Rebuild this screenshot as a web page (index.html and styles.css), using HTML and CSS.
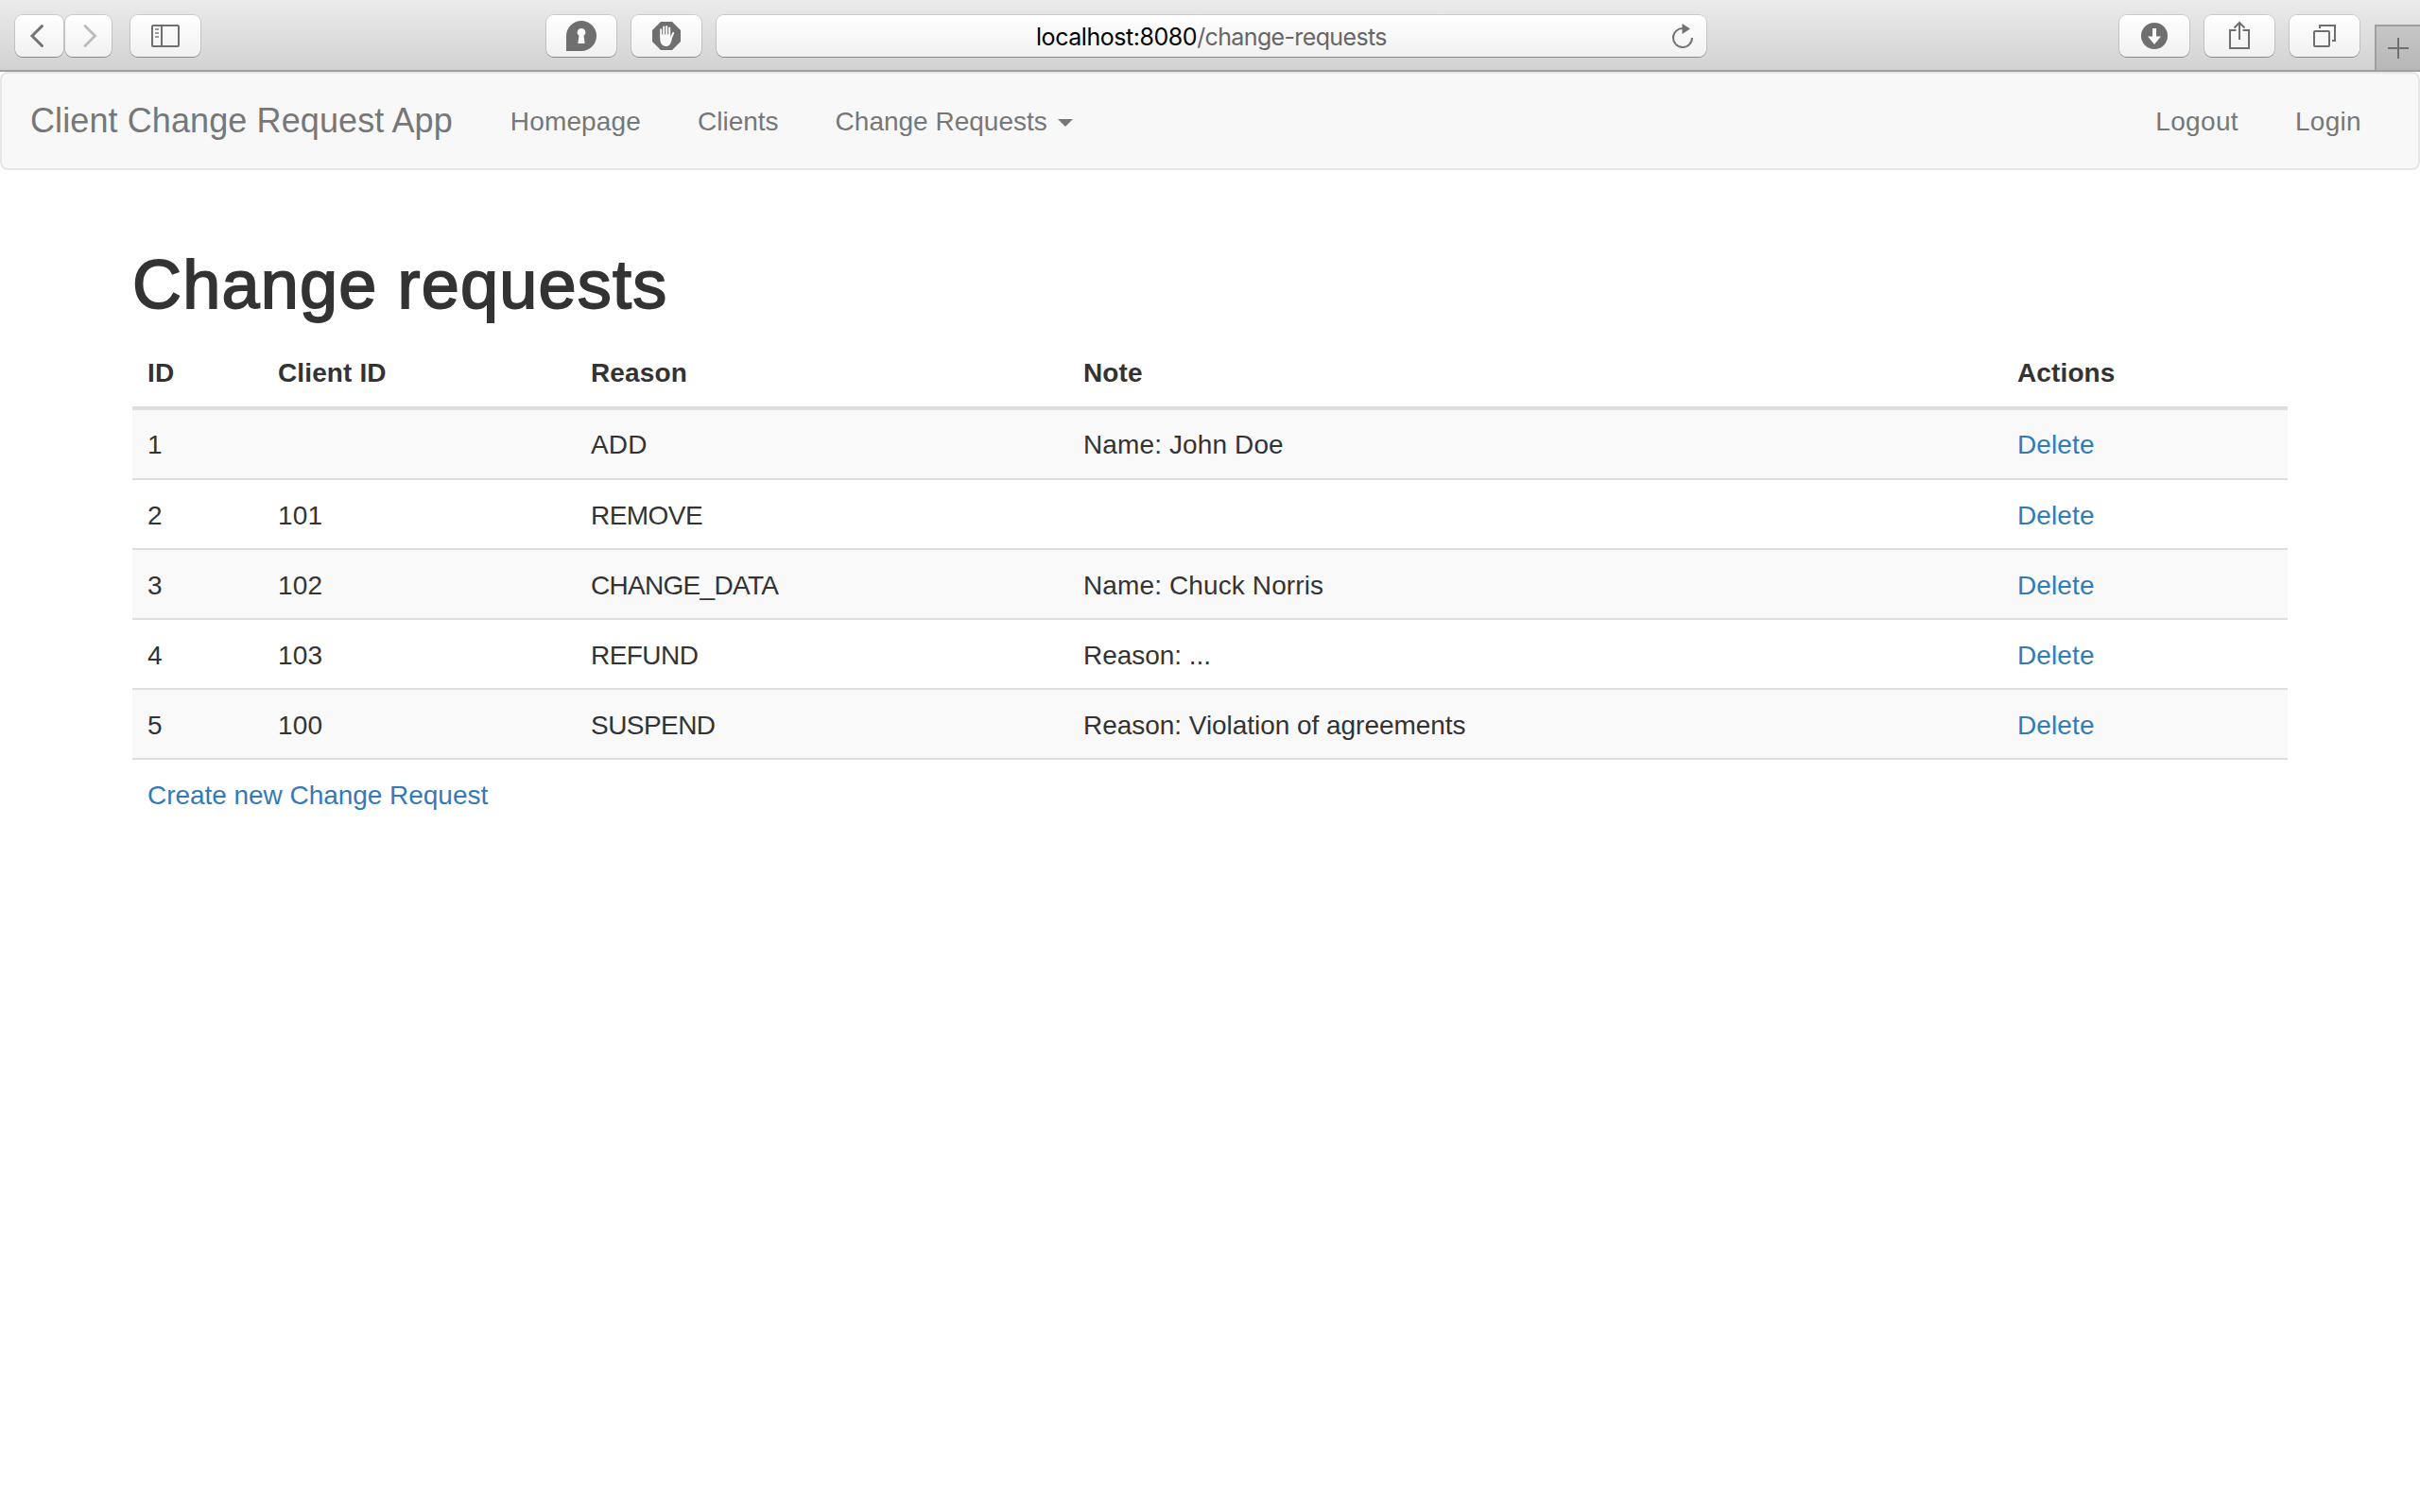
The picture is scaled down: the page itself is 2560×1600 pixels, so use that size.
FILE: index.html
```html
<!DOCTYPE html>
<html lang="en">
<head>
<meta charset="utf-8">
<title>Change requests</title>
<link rel="stylesheet" href="styles.css">
</head>
<body>
<header class="toolbar">
  <div class="btn back"><svg width="50" height="44" viewBox="0 0 50 44"><path d="M27.500 11.500 L17 22 L27.500 32.500" fill="none" stroke="#737373" stroke-width="3" stroke-linecap="round"/></svg></div>
  <div class="btn forward"><svg width="48" height="44" viewBox="0 0 48 44"><path d="M20 11.500 L30.500 22 L20 32.500" fill="none" stroke="#bdbdbd" stroke-width="3" stroke-linecap="round"/></svg></div>
  <div class="btn sidebar"><svg width="30" height="24" viewBox="0 0 30 24"><g fill="none" stroke="#6f6f6f" stroke-width="2"><rect x="1" y="1" width="28" height="22" rx="1"/><path d="M11 1v22"/><path d="M4 5h4M4 9h4M4 13h4" stroke="#9a9a9a"/></g></svg></div>
  <div class="btn keyhole"><svg width="32" height="32" viewBox="0 0 32 32"><path d="M0 32V16A16 16 0 1 1 16 32Z" fill="#6f6f6f"/><path d="M16 8a4.300 4.300 0 0 1 2.500 7.800l1.200 8.200h-7.400l1.200-8.200A4.300 4.300 0 0 1 16 8Z" fill="#fafafa"/></svg></div>
  <div class="btn blocker"><svg width="30" height="30" viewBox="0 0 30 30"><path d="M9 0H21L30 9V21L21 30H9L0 21V9Z" fill="#6f6f6f"/><path d="M9.200 15V8.200M12.200 14V5.500M15.200 14V5M18.200 15V6.500M18.800 19.500L22.200 12" fill="none" stroke="#f8f8f8" stroke-width="2" stroke-linecap="round"/><path d="M8.200 13.500H19.200V18L21 17C19.800 24 18 26 14.500 26S8.200 23 8.200 18Z" fill="#f8f8f8"/></svg></div>
  <div class="address">
    <div class="url"><span class="host">localhost:8080</span><span class="path">/change-requests</span></div>
    <svg class="reload" width="24" height="28" viewBox="0 0 24 28"><path d="M12.500 6A10 10 0 1 0 22 16" fill="none" stroke="#737373" stroke-width="2"/><path d="M11.500 1L20 6.500L11.500 12Z" fill="#737373"/></svg>
  </div>
  <div class="btn download"><svg width="28" height="28" viewBox="0 0 28 28"><circle cx="14" cy="14" r="14" fill="#6f6f6f"/><path d="M12 6h4v8.500h5L14 23L7 14.500h5Z" fill="#fafafa"/></svg></div>
  <div class="btn share"><svg width="24" height="32" viewBox="0 0 24 32"><g fill="none" stroke="#6f6f6f" stroke-width="2"><path d="M8.500 10H2V29H22V10H15.500"/><path d="M12 20V2M6.500 7.500L12 2L17.500 7.500"/></g></svg></div>
  <div class="btn tabs"><svg width="24" height="24" viewBox="0 0 24 24"><g fill="none" stroke="#6f6f6f" stroke-width="2"><rect x="1" y="7" width="16" height="16" rx="1"/><path d="M7 4V1H23V17H20"/></g></svg></div>
  <div class="new-tab"><svg width="22" height="22" viewBox="0 0 22 22"><path d="M11 0V22M0 11H22" stroke="#707070" stroke-width="2"/></svg></div>
</header>
<nav class="navbar">
  <a class="brand">Client Change Request App</a>
  <a class="link home">Homepage</a>
  <a class="link clients">Clients</a>
  <a class="link requests">Change Requests <span class="caret"></span></a>
  <a class="link logout">Logout</a>
  <a class="link login">Login</a>
</nav>
<main class="container">
  <h1 class="title">Change requests</h1>
  <div class="table">
    <div class="row head"><div>ID</div><div>Client ID</div><div>Reason</div><div>Note</div><div>Actions</div></div>
    <div class="row first"><div>1</div><div></div><div>ADD</div><div>Name: John Doe</div><div><a>Delete</a></div></div>
    <div class="row"><div>2</div><div>101</div><div class="caps">REMOVE</div><div></div><div><a>Delete</a></div></div>
    <div class="row odd"><div>3</div><div>102</div><div class="caps long">CHANGE_DATA</div><div>Name: Chuck Norris</div><div><a>Delete</a></div></div>
    <div class="row"><div>4</div><div>103</div><div class="caps">REFUND</div><div class="tight">Reason: ...</div><div><a>Delete</a></div></div>
    <div class="row odd"><div>5</div><div>100</div><div class="caps">SUSPEND</div><div class="tight">Reason: Violation of agreements</div><div><a>Delete</a></div></div>
    <div class="row foot"><div class="tight"><a>Create new Change Request</a></div></div>
  </div>
</main>
</body>
</html>
```
FILE: styles.css
```css
* { box-sizing: border-box; }
body {
  margin: 0;
  background: #fff;
  color: #333;
  font: 28px/40px "Liberation Sans", Arial, sans-serif;
}
svg { display: block; }

.toolbar {
  display: flex;
  align-items: flex-start;
  height: 76px;
  padding: 16px 0 0 16px;
  background: linear-gradient(#ebebeb, #d2d2d2);
  border-bottom: 2px solid #9f9f9f;
}
.btn, .address {
  display: flex;
  align-items: center;
  justify-content: center;
  height: 44px;
  border-radius: 8px;
  background: linear-gradient(#fff, #f1f1f1);
  box-shadow: 0 0 0 1px rgba(0, 0, 0, .12), 0 1px 0 rgba(0, 0, 0, .28);
}
.btn { width: 74px; }
.toolbar .back { width: 51px; }
.toolbar .forward { width: 49px; margin-left: 2px; }
.sidebar { margin-left: 20px; }
.keyhole { margin-left: 366px; }
.blocker, .address, .share, .tabs { margin-left: 16px; }
.address { width: 1047px; padding: 0 13px 0 338px; justify-content: space-between; }
.url {
  padding-top: 2px;
  color: #666;
  font: 25px/30px Inter, sans-serif;
  letter-spacing: -.64px;
  white-space: nowrap;
}
.host { color: #000; letter-spacing: -.45px; }
.download { margin-left: 437px; }
.new-tab {
  display: flex;
  width: 48px;
  height: 48px;
  margin: 10px 0 0 16px;
  padding: 12px 0 0 12px;
  border: solid #9f9f9f;
  border-width: 2px 0 0 2px;
  background: linear-gradient(#c6c6c6, #b7b7b7);
}

.navbar {
  display: flex;
  height: 104px;
  padding: 0 30px;
  border: 2px solid #e7e7e7;
  border-radius: 8px;
  background: #f8f8f8;
  color: #777;
  line-height: 102px;
  white-space: nowrap;
}
.brand { padding-right: 30px; font-size: 36px; line-height: 100px; letter-spacing: .1px; }
.link { height: 100px; padding: 0 30px; }
.home { padding-left: 31px; letter-spacing: .15px; }
.clients { letter-spacing: 0; }
.requests { display: flex; align-items: flex-start; }
.caret {
  margin: 48px 0 0 11px;
  border: 8px solid transparent;
  border-top-color: #777;
  border-bottom: 0;
}
.logout { margin-left: auto; letter-spacing: .35px; }
.login { letter-spacing: .3px; }

.container { width: 2280px; margin: 0 auto; }
.title {
  margin: 81px 0 17px;
  font-size: 72px;
  font-weight: 400;
  line-height: 80px;
  letter-spacing: 1.2px;
  -webkit-text-stroke: 1.8px #333;
}
.row {
  display: grid;
  grid-template-columns: 138px 331px 521px 988px 302px;
  height: 74px;
  padding-top: 18px;
  border-top: 2px solid #ddd;
  letter-spacing: .12px;
}
.row > div { padding: 0 16px; white-space: nowrap; }
.row a { color: #337ab7; }
.row.head {
  height: 76px;
  padding-top: 17px;
  border-top: 0;
  border-bottom: 4px solid #ddd;
  font-weight: 700;
}
.row.first { height: 72px; padding-top: 17px; border-top: 0; }
.row.first, .row.odd { background: #f9f9f9; }
.row .caps { letter-spacing: -.55px; }
.row .long { letter-spacing: -.7px; }
.row .tight { letter-spacing: -.04px; }
```
